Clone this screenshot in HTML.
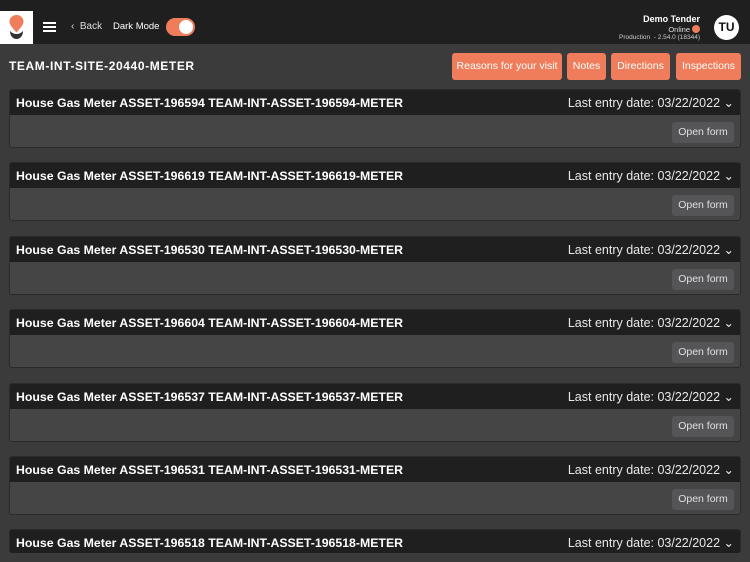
<!DOCTYPE html>
<html><head><style>
*{box-sizing:border-box;margin:0;padding:0}
body{width:750px;height:562px;overflow:hidden;background:#3b3b3c;font-family:"Liberation Sans",sans-serif;color:#fff;position:relative}
.top{position:absolute;left:0;top:0;width:750px;height:44px;background:#1f1f20}
.logo{position:absolute;left:0;top:11px;width:33px;height:33px;background:#fff}
.title{position:absolute;left:9px;top:59px;font-size:12px;font-weight:bold;letter-spacing:0.6px}
.btn{position:absolute;top:53px;height:27px;background:#ef7d5b;border-radius:3px;color:#fff;font-size:10.5px;line-height:27px;text-align:center}
.card{position:absolute;left:9px;width:732px;height:59px;background:#454546;border:1px solid #2a2a2b;border-radius:3px;overflow:hidden}
.ch{height:25px;background:#1f1f20;display:flex;justify-content:space-between;align-items:center;padding:0 6px}
.ch b{font-size:12.3px}
.ch span{font-size:12.5px;color:#e8e8e8}
.of{position:absolute;right:6px;top:32px;width:62px;height:21px;background:#555557;border-radius:3px;font-size:10.5px;color:#e0e0e0;text-align:center;line-height:21px}
</style></head><body>
<div class="top">
<div class="logo"><svg width="33" height="33"><path d="M16.5 4c-4 0-7 3-7 6.5 0 3.5 4 7.5 7 11 3-3.5 7-7.5 7-11C23.5 7 20.5 4 16.5 4z" fill="#ef7d5b"/><path d="M10 20c0 5 3 8 6.5 8s6.5-3 6.5-8c-2 2-4 3-6.5 3s-4.5-1-6.5-3z" fill="#333"/></svg></div>
<div style="position:absolute;left:43px;top:22px;width:13px;height:2px;background:#fff;box-shadow:0 4px 0 #fff,0 8px 0 #fff"></div>
<div style="position:absolute;left:71px;top:21px;font-size:10px;color:#ddd">‹&nbsp; Back</div>
<div style="position:absolute;left:113px;top:21px;font-size:9.5px">Dark Mode</div>
<div style="position:absolute;left:166px;top:18px;width:29px;height:18px;border-radius:9px;background:#ef7d5b"><div style="position:absolute;right:2px;top:2px;width:14px;height:14px;border-radius:50%;background:#fff"></div></div>
<div style="position:absolute;right:50px;top:14px;font-size:9px;font-weight:bold">Demo Tender</div>
<div style="position:absolute;right:60px;top:25px;font-size:7.5px;color:#ddd">Online</div>
<div style="position:absolute;left:692px;top:25px;width:8px;height:8px;border-radius:50%;background:#ef7d5b"></div>
<div style="position:absolute;right:50px;top:34px;font-size:6.5px;color:#ccc">Production&nbsp; - 2.54.0 (18344)</div>
<div style="position:absolute;left:714px;top:15px;width:25px;height:25px;border-radius:50%;background:#fff;color:#111;font-size:12px;font-weight:bold;text-align:center;line-height:25px">TU</div>
</div>
<div class="title">TEAM-INT-SITE-20440-METER</div>
<div class="btn" style="left:452px;width:110px">Reasons for your visit</div>
<div class="btn" style="left:567px;width:39px">Notes</div>
<div class="btn" style="left:611px;width:59px">Directions</div>
<div class="btn" style="left:676px;width:65px">Inspections</div>

<div class="card" style="top:89px"><div class="ch"><b>House Gas Meter ASSET-196594 TEAM-INT-ASSET-196594-METER</b><span>Last entry date: 03/22/2022 ⌄</span></div><div class="of">Open form</div></div>
<div class="card" style="top:162px"><div class="ch"><b>House Gas Meter ASSET-196619 TEAM-INT-ASSET-196619-METER</b><span>Last entry date: 03/22/2022 ⌄</span></div><div class="of">Open form</div></div>
<div class="card" style="top:236px"><div class="ch"><b>House Gas Meter ASSET-196530 TEAM-INT-ASSET-196530-METER</b><span>Last entry date: 03/22/2022 ⌄</span></div><div class="of">Open form</div></div>
<div class="card" style="top:309px"><div class="ch"><b>House Gas Meter ASSET-196604 TEAM-INT-ASSET-196604-METER</b><span>Last entry date: 03/22/2022 ⌄</span></div><div class="of">Open form</div></div>
<div class="card" style="top:383px"><div class="ch"><b>House Gas Meter ASSET-196537 TEAM-INT-ASSET-196537-METER</b><span>Last entry date: 03/22/2022 ⌄</span></div><div class="of">Open form</div></div>
<div class="card" style="top:456px"><div class="ch"><b>House Gas Meter ASSET-196531 TEAM-INT-ASSET-196531-METER</b><span>Last entry date: 03/22/2022 ⌄</span></div><div class="of">Open form</div></div>
<div class="card" style="top:529px;height:24px;border-bottom:none"><div class="ch"><b>House Gas Meter ASSET-196518 TEAM-INT-ASSET-196518-METER</b><span>Last entry date: 03/22/2022 ⌄</span></div></div>
</body></html>
